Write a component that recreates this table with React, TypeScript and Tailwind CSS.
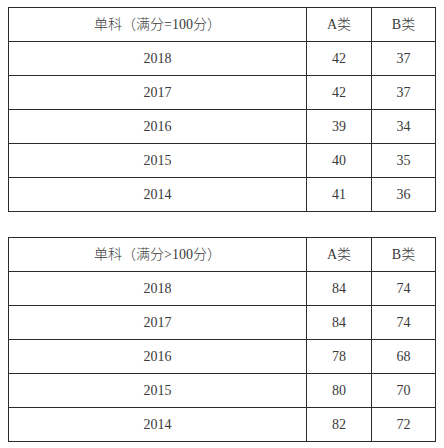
const tables = [
  {
    title: '单科（满分=100分）',
    rows: [
      ['2018', '42', '37'],
      ['2017', '42', '37'],
      ['2016', '39', '34'],
      ['2015', '40', '35'],
      ['2014', '41', '36']
    ]
  },
  {
    title: '单科（满分>100分）',
    rows: [
      ['2018', '84', '74'],
      ['2017', '84', '74'],
      ['2016', '78', '68'],
      ['2015', '80', '70'],
      ['2014', '82', '72']
    ]
  }
]

const cell = 'flex items-center justify-center'

const ScoreTable = ({ title, rows }: { title: string; rows: string[][] }) => {
  return (
    <div className="w-[428px] border border-[#2b2b2b]">
      <div className="grid h-[33px] grid-cols-[297px_65px_64px]">
        <div className={cell}>{title}</div>
        <div className={`${cell} border-l border-[#2b2b2b]`}>A类</div>
        <div className={`${cell} border-l border-[#2b2b2b]`}>B类</div>
      </div>
      {rows.map((row) => (
        <div key={row[0]} className="grid h-[34px] grid-cols-[297px_65px_64px] border-t border-[#2b2b2b]">
          <div className={cell}>{row[0]}</div>
          <div className={`${cell} border-l border-[#2b2b2b]`}>{row[1]}</div>
          <div className={`${cell} border-l border-[#2b2b2b]`}>{row[2]}</div>
        </div>
      ))}
    </div>
  )
}

const App = () => {
  return (
    <div
      className="flex min-h-[448px] flex-col gap-[25px] bg-white pl-[8px] pt-[7px] text-[14px] font-light text-[#3a3a3a]"
      style={{ fontFamily: '"Liberation Serif", "Noto Sans CJK SC", serif' }}
    >
      {tables.map((table) => (
        <ScoreTable key={table.title} title={table.title} rows={table.rows} />
      ))}
    </div>
  )
}

export default App
